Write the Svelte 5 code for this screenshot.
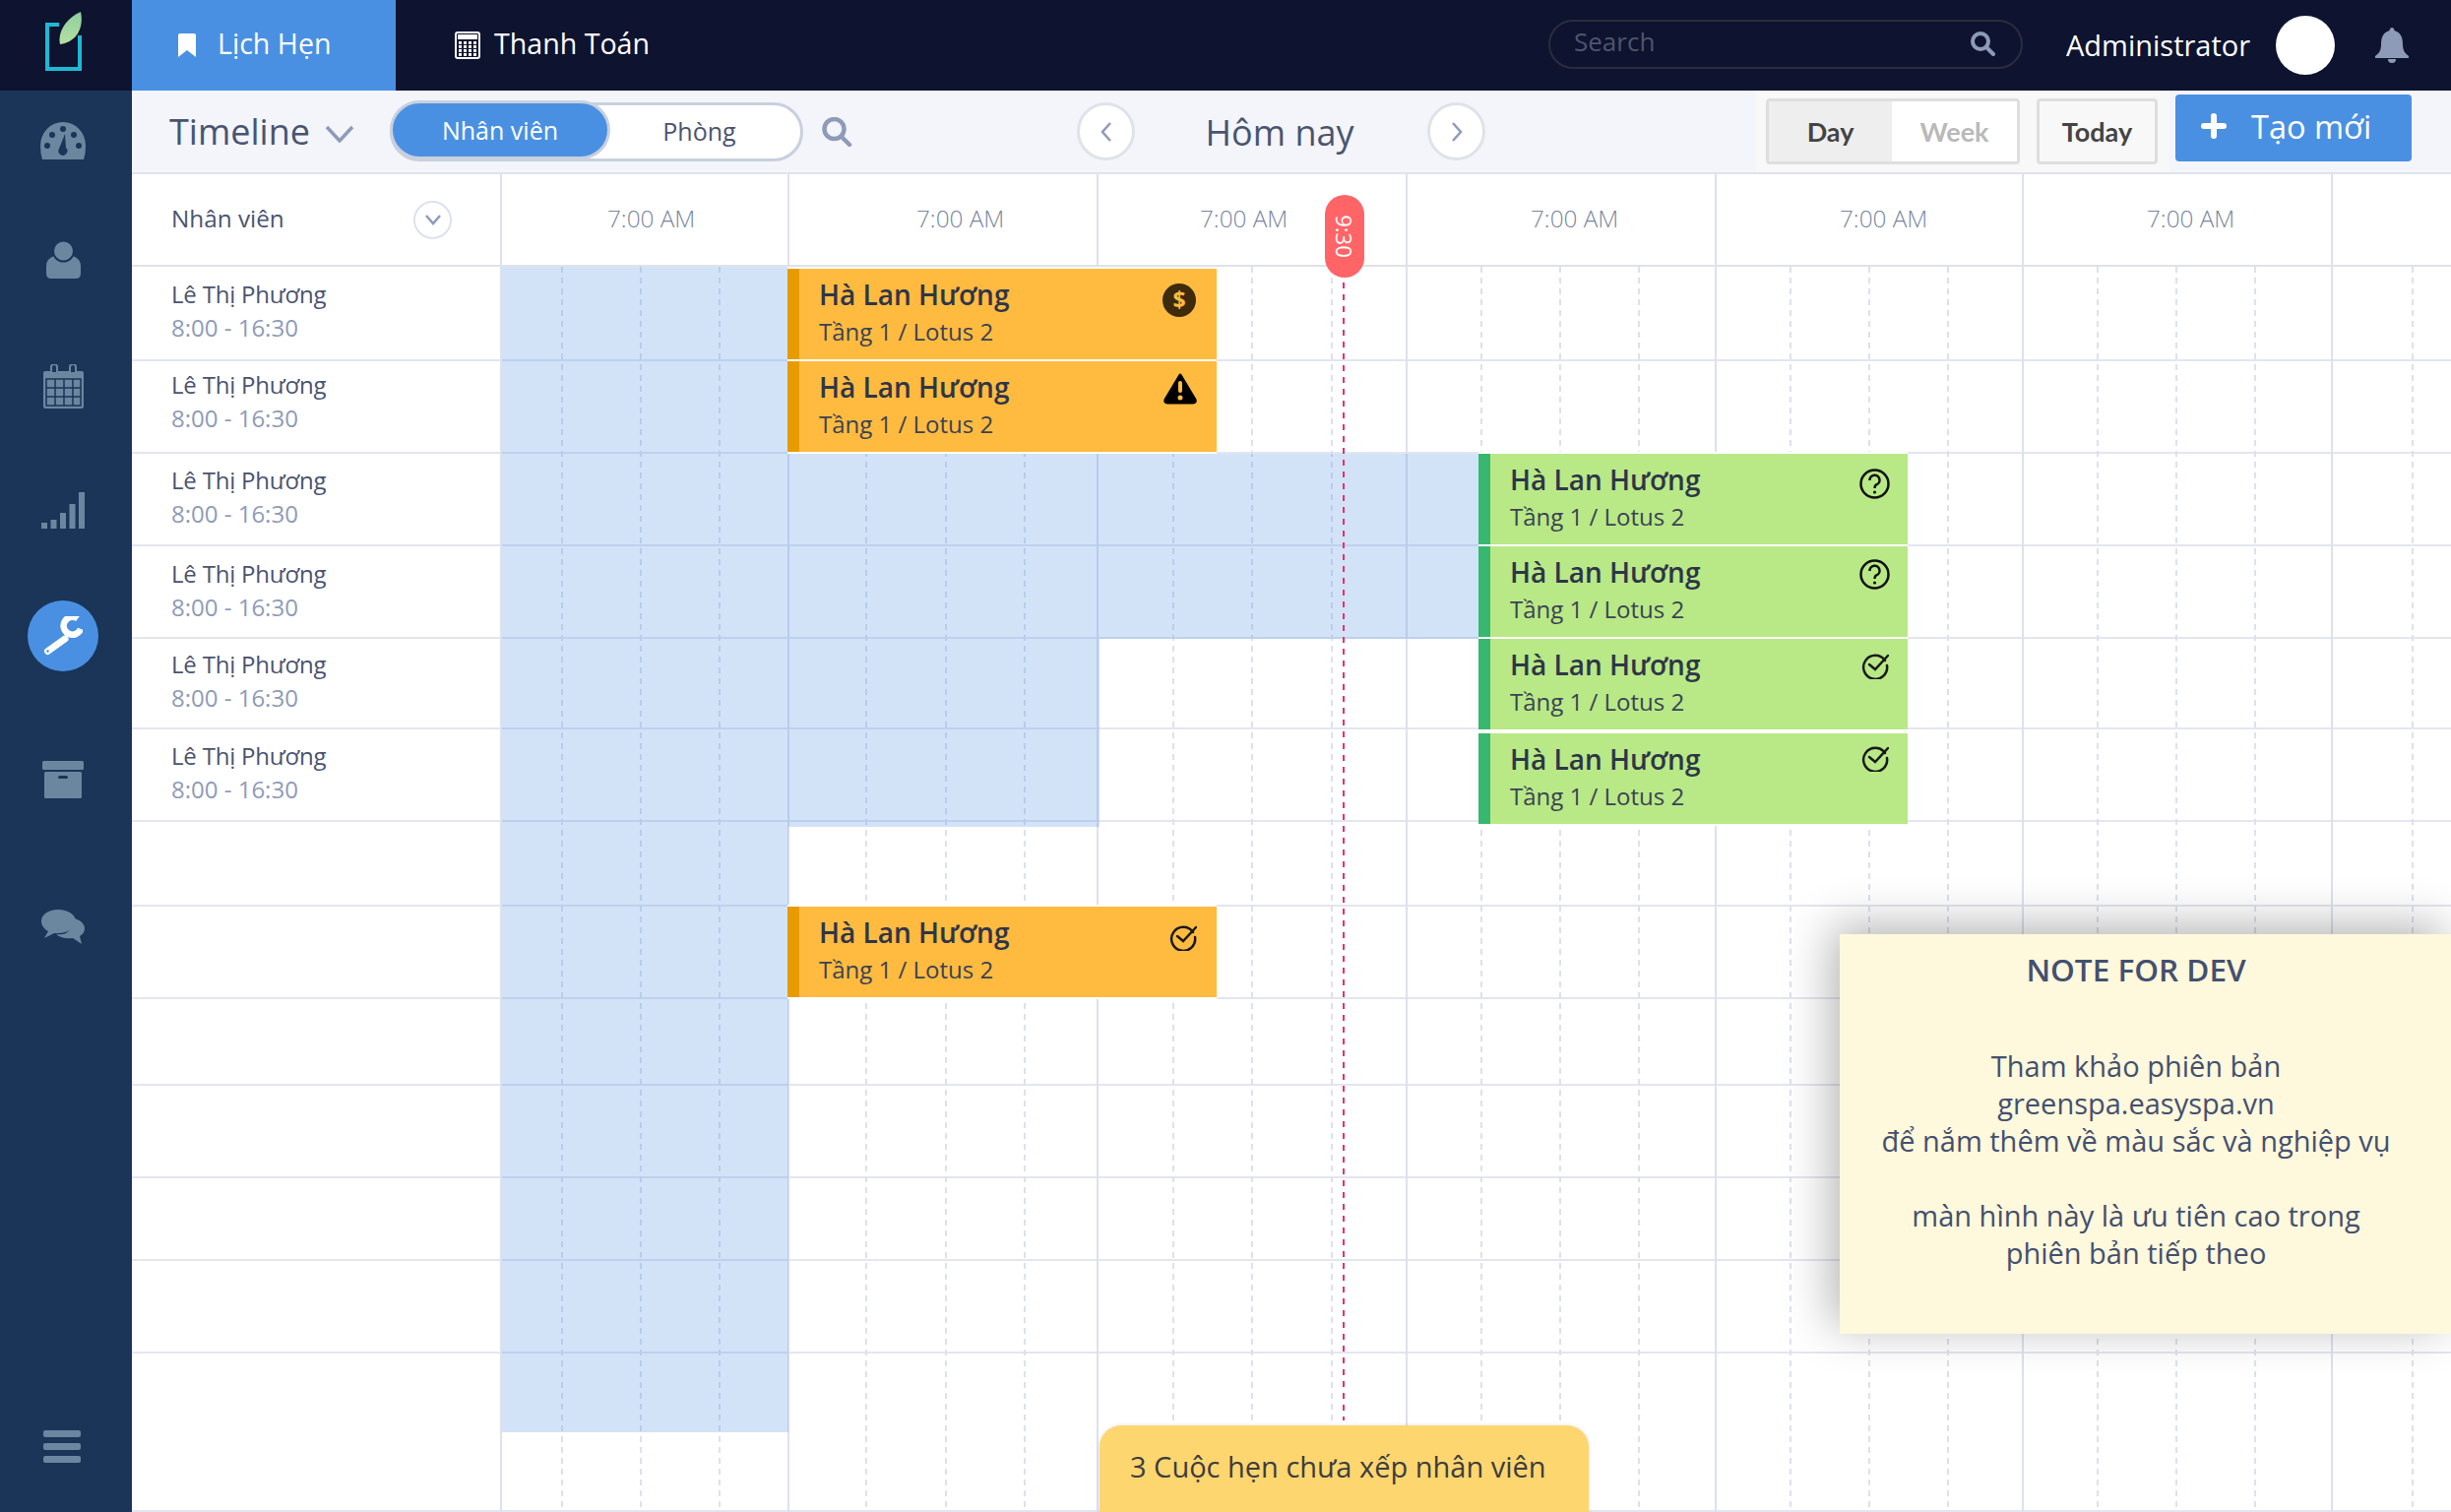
<script>
    const staff = [
        { name: 'Lê Thị Phương', time: '8:00 - 16:30', pad: 5 },
        { name: 'Lê Thị Phương', time: '8:00 - 16:30', pad: 11 },
        { name: 'Lê Thị Phương', time: '8:00 - 16:30', pad: 5 },
        { name: 'Lê Thị Phương', time: '8:00 - 16:30', pad: 2 },
        { name: 'Lê Thị Phương', time: '8:00 - 16:30', pad: 5 },
        { name: 'Lê Thị Phương', time: '8:00 - 16:30', pad: 5 }
    ];
    // bottom edge of each row, the first one starts right under the header
    const rowHeights = [96, 94, 94, 94, 92, 94, 86, 94, 88, 94, 84, 94, 161];

    const columns = [
        { width: 292, pad: 107, dashes: [60, 140, 220] },
        { width: 314, pad: 129, dashes: [77, 158, 238] },
        { width: 314, pad: 103, dashes: [75, 155, 236] },
        { width: 314, pad: 125, dashes: [74, 154, 234] },
        { width: 312, pad: 125, dashes: [74, 154, 234] },
        { width: 314, pad: 125, dashes: [74, 154, 234] },
        { width: 122, pad: 0, dashes: [80], empty: true }
    ];

    const blocks = [
        { x: 2, y: 0, w: 291, h: 1184 },
        { x: 293, y: 190, w: 316, h: 379 },
        { x: 609, y: 190, w: 385, h: 188 }
    ];

    const events = [
        { x: 292, y: 2, kind: 'orange', icon: 'dollar', top: 7, right: 3 },
        { x: 292, y: 96, kind: 'orange', icon: 'warn', top: 4, right: 2 },
        { x: 994, y: 190, kind: 'green', icon: 'question', top: 7, right: 0 },
        { x: 994, y: 284, kind: 'green', icon: 'question', top: 5, right: 0 },
        { x: 994, y: 378, kind: 'green', icon: 'check', top: 5, right: 1 },
        { x: 994, y: 474, kind: 'green', icon: 'check', top: 3, right: 1 },
        { x: 292, y: 650, kind: 'orange', icon: 'check', top: 9, right: 2 }
    ];

    const nav = [
        { id: 'gauge', gap: 15 },
        { id: 'person', gap: 49 },
        { id: 'calendar', gap: 56 },
        { id: 'bars', gap: 54 },
        { id: 'wrench', gap: 56, active: true },
        { id: 'archive', gap: 74 },
        { id: 'chat', gap: 77 }
    ];
</script>

<div class="app">
    <header class="topbar">
        <div class="logo">
            <svg width="38" height="60" viewBox="0 0 38 60">
                <defs>
                    <linearGradient id="leaf" x1="0" y1="0" x2="0" y2="1">
                        <stop offset="0" stop-color="#8ccf9d" />
                        <stop offset="1" stop-color="#b7dfa0" />
                    </linearGradient>
                </defs>
                <path d="M14 13 H2 V58 H35 V24" fill="none" stroke="#1fb8d3" stroke-width="4" />
                <path d="M15 33 C12 20 22 6 36 0 C39 14 34 30 15 33Z" fill="url(#leaf)" />
            </svg>
        </div>
        <a class="tab active">
            <svg width="20" height="24" viewBox="0 0 20 24"><path d="M1 2 Q1 0 3 0 H17 Q19 0 19 2 V24 L10 17 L1 24Z" fill="#fff" /></svg>
            <span>Lịch Hẹn</span>
        </a>
        <a class="tab">
            <svg width="26" height="28" viewBox="0 0 26 28">
                <rect x="1" y="1" width="24" height="26" rx="2" fill="none" stroke="#fff" stroke-width="2" />
                <rect x="3" y="3" width="20" height="5" fill="#fff" />
                {#each [0, 1, 2, 3] as c}
                    {#each [0, 1, 2, 3] as r}
                        <rect x={4 + c * 5} y={10 + r * 4} width="3" height="3" fill="#fff" />
                    {/each}
                {/each}
            </svg>
            <span>Thanh Toán</span>
        </a>
        <div class="search">
            <span>Search</span>
            <svg width="27" height="25" viewBox="0 0 27 25"><circle cx="11" cy="10" r="8" fill="none" stroke="#8e9bb8" stroke-width="4" /><path d="M17 16 L24 23" stroke="#8e9bb8" stroke-width="4" stroke-linecap="round" /></svg>
        </div>
        <div class="user">Administrator</div>
        <div class="avatar"></div>
        <svg class="bell" width="34" height="36" viewBox="0 0 34 36">
            <path d="M17 0 Q19 0 19.500 3 C26 5 28 10 28 17 C28 23 30 26 34 29 V31 H0 V29 C4 26 6 23 6 17 C6 10 8 5 14.500 3 Q15 0 17 0Z" fill="#8e9bb8" />
            <path d="M13 32 A4 4 0 0 0 21 32" fill="#8e9bb8" />
        </svg>
    </header>

    <div class="main">
        <nav class="sidebar">
            {#each nav as item}
                <div class="nav-item" class:active={item.active} style:margin-top="{item.gap}px">
                    {#if item.id === 'gauge'}
                        <svg width="46" height="38" viewBox="0 0 46 38">
                            <path d="M2 38 Q0 32 0 24 A23 24 0 0 1 46 24 Q46 32 44 38Z" fill="#6b869f" />
                            <g fill="#1a3558"><circle cx="12" cy="13" r="3" /><circle cx="23" cy="7" r="3" /><circle cx="34" cy="13" r="3" /><circle cx="7" cy="24" r="3" /><circle cx="39" cy="24" r="3" /></g>
                            <path d="M25 12 L26 26 A4.500 4.500 0 1 1 19 27Z" fill="#1a3558" />
                        </svg>
                    {:else if item.id === 'person'}
                        <svg width="35" height="38" viewBox="0 0 35 38">
                            <path d="M0 25 Q0 18 8 15 H27 Q35 18 35 25 V33 Q35 38 30 38 H5 Q0 38 0 33Z" fill="#6b869f" />
                            <circle cx="17.500" cy="10" r="10.500" fill="#6b869f" stroke="#1a3558" stroke-width="2" />
                        </svg>
                    {:else if item.id === 'calendar'}
                        <svg width="41" height="45" viewBox="0 0 41 45">
                            <path d="M2 7 H39 Q41 7 41 9 V43 Q41 45 39 45 H2 Q0 45 0 43 V9 Q0 7 2 7Z" fill="#6b869f" />
                            <path d="M8 8 V3 A3 3 0 0 1 14 3 V8 M27 8 V3 A3 3 0 0 1 33 3 V8" fill="#1a3558" stroke="#6b869f" stroke-width="2" />
                            <g fill="none" stroke="#1a3558" stroke-width="1.500">
                                <rect x="3" y="15" width="35" height="27" />
                                <path d="M3 24 H38 M3 33 H38 M12 15 V42 M21 15 V42 M30 15 V42" />
                            </g>
                        </svg>
                    {:else if item.id === 'bars'}
                        <svg width="44" height="37" viewBox="0 0 44 37" fill="#6b869f">
                            <rect x="0" y="31" width="6" height="6" /><rect x="9.500" y="28" width="6" height="9" /><rect x="19" y="21" width="6" height="16" /><rect x="28.500" y="12" width="6" height="25" /><rect x="38" y="0" width="6" height="37" />
                        </svg>
                    {:else if item.id === 'wrench'}
                        <svg width="40" height="41" viewBox="0 0 40 41">
                            <path d="M4.500 35.500 L22 23" stroke="#fff" stroke-width="7" stroke-linecap="round" />
                            <path d="M35 2.500 A9 9 0 1 0 38 13" fill="none" stroke="#fff" stroke-width="6.500" />
                            <circle cx="4.500" cy="35.500" r="1.300" fill="#4a90e2" />
                        </svg>
                    {:else if item.id === 'archive'}
                        <svg width="42" height="38" viewBox="0 0 42 38">
                            <rect x="0" y="0" width="42" height="9" rx="1.500" fill="#6b869f" />
                            <rect x="2" y="11" width="38" height="27" rx="1.500" fill="#6b869f" />
                            <rect x="16" y="15" width="10" height="3" rx="1.500" fill="#1a3558" />
                        </svg>
                    {:else}
                        <svg width="44" height="35" viewBox="0 0 44 35">
                            <path d="M29 9 C38 8 44 14 44 19 C44 23 42 25 39 27 L41 35 L32 29 C24 30 18 28 15 25 C25 27 35 20 29 9Z" fill="#6b869f" />
                            <path d="M17 0 C27 0 35 5 35 12 C35 19 27 24 17 24 L13 24 L3 29 L7 22 C3 20 0 16 0 12 C0 5 7 0 17 0Z" fill="#6b869f" />
                        </svg>
                    {/if}
                </div>
            {/each}
            <div class="burger"><i></i><i></i><i></i></div>
        </nav>

        <div class="content">
            <div class="toolbar">
                <span class="view">Timeline</span>
                <svg class="view-caret" width="30" height="18" viewBox="0 0 30 18"><path d="M2 2 L15 16 L28 2" fill="none" stroke="#8e9bb8" stroke-width="3.500" /></svg>
                <div class="toggle">
                    <span class="on">Nhân viên</span>
                    <span class="off">Phòng</span>
                </div>
                <svg class="find" width="31" height="30" viewBox="0 0 31 30"><circle cx="12.500" cy="12" r="10" fill="none" stroke="#8e9bb8" stroke-width="4.500" /><path d="M20 20 L28 28" stroke="#8e9bb8" stroke-width="4.500" stroke-linecap="round" /></svg>
                <div class="round prev"><svg width="14" height="22" viewBox="0 0 14 22"><path d="M11 2 L3 11 L11 20" fill="none" stroke="#8e9bb8" stroke-width="2.500" /></svg></div>
                <div class="today">Hôm nay</div>
                <div class="round"><svg width="14" height="22" viewBox="0 0 14 22"><path d="M3 2 L11 11 L3 20" fill="none" stroke="#8e9bb8" stroke-width="2.500" /></svg></div>
                <div class="actions">
                    <div class="range">
                        <span class="day">Day</span>
                        <span class="week">Week</span>
                    </div>
                    <div class="btn-today">Today</div>
                </div>
                <div class="create">
                    <svg width="26" height="26" viewBox="0 0 26 26"><path d="M13 3 V23 M3 13 H23" stroke="#fff" stroke-width="6" stroke-linecap="round" /></svg>
                    Tạo mới
                </div>
            </div>

            <div class="board">
                <div class="head">
                    <div class="head-name">
                        <span>Nhân viên</span>
                        <div class="caret"><svg width="18" height="12" viewBox="0 0 18 12"><path d="M2 2 L9 10 L16 2" fill="none" stroke="#8e9bb8" stroke-width="2.500" /></svg></div>
                    </div>
                    {#each columns as col}
                        <div class="head-col" style:width="{col.width}px" style:padding-left="{col.pad}px">
                            {#if !col.empty}<span>7:00 AM</span>{/if}
                        </div>
                    {/each}
                </div>

                <div class="rows">
                    {#each rowHeights as h, i}
                        <div class="row" style:height="{h}px" style:padding-bottom="{staff[i] ? staff[i].pad : 0}px">
                            {#if staff[i]}
                                <div class="who">{staff[i].name}</div>
                                <div class="shift">{staff[i].time}</div>
                            {/if}
                        </div>
                    {/each}

                    <div class="canvas">
                        {#each columns as col}
                            <div class="col" style:width="{col.width}px">
                                {#each col.dashes as d}
                                    <i class="dash" style:left="{d}px"></i>
                                {/each}
                            </div>
                        {/each}
                        {#each blocks as b}
                            <div class="block" style:left="{b.x}px" style:top="{b.y}px" style:width="{b.w}px" style:height="{b.h}px"></div>
                        {/each}
                        <i class="now-line"></i>
                        {#each events as ev}
                            <div class="event {ev.kind}" style:left="{ev.x}px" style:top="{ev.y}px">
                                <div class="event-text">
                                    <div class="event-title">Hà Lan Hương</div>
                                    <div class="event-place">Tầng 1 / Lotus 2</div>
                                </div>
                                <div class="ev-icon" style:margin-top="{ev.top}px" style:margin-right="{ev.right}px">
                                    {#if ev.icon === 'dollar'}
                                        <svg width="34" height="34" viewBox="0 0 34 34">
                                            <circle cx="17" cy="17" r="17" fill="#3d2b0c" />
                                            <text x="17" y="25" text-anchor="middle" fill="#ffbb40" font-size="23" font-weight="700" font-family="Open Sans, sans-serif">$</text>
                                        </svg>
                                    {:else if ev.icon === 'warn'}
                                        <svg width="34" height="32" viewBox="0 0 34 32">
                                            <path d="M17 2 L32 27 Q33 30 30 30 H4 Q1 30 2 27Z" fill="#000" stroke="#000" stroke-width="3" stroke-linejoin="round" />
                                            <rect x="15" y="8" width="4" height="12" rx="2" fill="#ffbb40" />
                                            <circle cx="17" cy="25" r="2.500" fill="#ffbb40" />
                                        </svg>
                                    {:else if ev.icon === 'question'}
                                        <svg width="31" height="31" viewBox="0 0 31 31">
                                            <circle cx="15.500" cy="15.500" r="14" fill="none" stroke="#111" stroke-width="2.500" />
                                            <path d="M10.500 12 A5 5 0 1 1 17 16.500 Q15.500 17.200 15.500 20" fill="none" stroke="#111" stroke-width="2.500" />
                                            <circle cx="15.500" cy="24" r="1.600" fill="#111" />
                                        </svg>
                                    {:else}
                                        <svg width="28" height="28" viewBox="0 0 28 28">
                                            <path d="M24 9 A12 12 0 1 0 26 14" fill="none" stroke="#1a1a1a" stroke-width="2.500" stroke-linecap="round" />
                                            <path d="M8 13 L14 18 L27 4" fill="none" stroke="#1a1a1a" stroke-width="2.500" stroke-linecap="round" />
                                        </svg>
                                    {/if}
                                </div>
                            </div>
                        {/each}
                    </div>
                </div>

                <div class="now-pill"><span>9:30</span></div>

                <aside class="note">
                    <h3>NOTE FOR DEV</h3>
                    <p>Tham khảo phiên bản<br />greenspa.easyspa.vn<br />để nắm thêm về màu sắc và nghiệp vụ</p>
                    <p>màn hình này là ưu tiên cao trong<br />phiên bản tiếp theo</p>
                </aside>

                <div class="pending">3 Cuộc hẹn chưa xếp nhân viên</div>
            </div>
        </div>
    </div>
</div>

<style>
    :global(body) {
        margin: 0;
        font-family: "Open Sans", sans-serif;
    }
    .app {
        width: 2490px;
        height: 1536px;
        overflow: hidden;
        display: flex;
        flex-direction: column;
        background: #fff;
    }
    .topbar {
        height: 92px;
        flex: none;
        display: flex;
        align-items: center;
        background: #0e1330;
        color: #fff;
    }
    .logo {
        width: 134px;
        height: 92px;
        padding: 12px 0 0 46px;
        box-sizing: border-box;
        flex: none;
    }
    .tab {
        height: 92px;
        display: flex;
        align-items: center;
        box-sizing: border-box;
        flex: none;
        font-size: 28.6px;
        gap: 14px;
        padding-left: 60px;
    }
    .tab span {
        margin-bottom: 6px;
    }
    .tab.active {
        width: 268px;
        padding-left: 46px;
        gap: 21px;
        background: #4a90e2;
    }
    .search {
        margin-left: auto;
        width: 482px;
        height: 50px;
        box-sizing: border-box;
        margin-top: -3px;
        border: 2px solid #2a2e3c;
        border-radius: 25px;
        display: flex;
        align-items: center;
        justify-content: space-between;
        padding: 0 25px 0 24px;
        font-size: 26px;
        color: #4d566c;
        margin-right: 44px;
    }
    .search span {
        margin-bottom: 5px;
    }
    .user {
        font-size: 29px;
        width: 188px;
        white-space: nowrap;
        margin-bottom: 2px;
    }
    .avatar {
        width: 60px;
        height: 60px;
        border-radius: 50%;
        background: #fff;
        margin-left: 25px;
    }
    .bell {
        margin: 0 43px 0 41px;
    }
    .main {
        flex: 1;
        display: flex;
        min-height: 0;
    }
    .sidebar {
        width: 134px;
        flex: none;
        display: flex;
        flex-direction: column;
        padding-left: 28px;
        padding-bottom: 50px;
        box-sizing: border-box;
        background: #1a3558;
    }
    .nav-item {
        width: 72px;
        height: 72px;
        display: flex;
        align-items: center;
        justify-content: center;
        border-radius: 50%;
        flex: none;
    }
    .nav-item.active {
        background: #4a90e2;
    }
    .burger {
        margin-top: auto;
        margin-left: 16px;
        display: flex;
        flex-direction: column;
        gap: 6px;
    }
    .burger i {
        width: 38px;
        height: 7px;
        border-radius: 2px;
        background: #6b869f;
    }
    .content {
        flex: 1;
        min-width: 0;
        display: flex;
        flex-direction: column;
    }
    .toolbar {
        height: 85px;
        flex: none;
        box-sizing: border-box;
        display: flex;
        align-items: center;
        padding-left: 38px;
        background: #f3f5fa;
        border-bottom: 2px solid #dfe2ea;
    }
    .view {
        font-size: 36px;
        width: 142px;
        color: #4a5470;
        white-space: nowrap;
        flex: none;
    }
    .view-caret {
        flex: none;
        margin-left: 16px;
        margin-top: 4px;
    }
    .toggle {
        flex: none;
        width: 420px;
        height: 60px;
        box-sizing: border-box;
        margin-left: 36px;
        display: flex;
        border: 3px solid #c8d0de;
        border-radius: 30px;
        background: #fff;
        font-size: 25px;
        align-items: center;
    }
    .toggle .on {
        width: 224px;
        height: 60px;
        margin: -3px 0 0 -3px;
        box-sizing: border-box;
        border: 3px solid #c8d0de;
        border-radius: 30px;
        background: #4a90e2;
        color: #fff;
        display: flex;
        align-items: center;
        justify-content: center;
    }
    .toggle .off {
        flex: 1;
        text-align: center;
        color: #4a5470;
        margin: -2px 12px 0 0;
    }
    .find {
        flex: none;
        margin-left: 19px;
    }
    .round {
        flex: none;
        width: 59px;
        height: 59px;
        box-sizing: border-box;
        border: 3px solid #dfe2ea;
        border-radius: 50%;
        background: #fff;
        display: flex;
        align-items: center;
        justify-content: center;
    }
    .round.prev {
        margin-left: 228px;
    }
    .today {
        flex: none;
        width: 297px;
        box-sizing: border-box;
        padding-right: 3px;
        text-align: center;
        font-size: 36px;
        color: #4a5470;
        margin-top: 2px;
    }
    .actions {
        flex: none;
        height: 83px;
        box-sizing: border-box;
        margin-left: 275px;
        padding: 8px 12px 8px 10px;
        display: flex;
        gap: 17px;
        background: #f8f8f8;
    }
    .range, .btn-today {
        box-sizing: border-box;
        height: 67px;
        border: 3px solid #dedede;
        border-radius: 4px;
        display: flex;
        align-items: center;
        font-family: Lato, sans-serif;
        font-weight: 700;
        font-size: 27px;
        color: #444;
    }
    .range {
        width: 258px;
        overflow: hidden;
    }
    .range span {
        height: 100%;
        display: flex;
        align-items: center;
        justify-content: center;
    }
    .day {
        width: 125px;
        background: #eee;
    }
    .week {
        flex: 1;
        background: #fff;
        color: #b9b9b9;
    }
    .btn-today {
        width: 123px;
        justify-content: center;
    }
    .create {
        flex: none;
        margin-left: 6px;
        width: 240px;
        height: 68px;
        box-sizing: border-box;
        margin-top: -7px;
        padding: 0 0 4px 26px;
        gap: 25px;
        border-radius: 4px;
        background: #4a90e2;
        color: #fff;
        font-size: 32.5px;
        display: flex;
        align-items: center;
    }
    .board {
        flex: 1;
        position: relative;
        overflow: hidden;
        min-height: 0;
    }
    .head {
        height: 94px;
        box-sizing: border-box;
        display: flex;
        border-bottom: 2px solid #dfe2e8;
    }
    .head-name {
        width: 374px;
        box-sizing: border-box;
        flex: none;
        padding: 0 49px 0 40px;
        display: flex;
        align-items: center;
        justify-content: space-between;
        font-size: 24.3px;
        color: #4a5470;
    }
    .head-name span, .head-col span {
        margin-bottom: 3px;
    }
    .caret {
        width: 39px;
        height: 39px;
        box-sizing: border-box;
        border: 2px solid #dde1ee;
        border-radius: 50%;
        display: flex;
        align-items: center;
        justify-content: center;
    }
    .head-col {
        flex: none;
        box-sizing: border-box;
        display: flex;
        align-items: center;
        border-left: 2px solid #dde1ee;
        font-size: 24.3px;
        font-weight: 300;
        color: #78859f;
        white-space: nowrap;
    }
    .rows {
        position: relative;
    }
    .row {
        box-sizing: border-box;
        border-bottom: 2px solid #e3e6f0;
        padding-left: 40px;
        display: flex;
        flex-direction: column;
        justify-content: center;
    }
    .who {
        font-size: 24px;
        line-height: 34px;
        letter-spacing: -0.2px;
        color: #4a5470;
    }
    .shift {
        font-size: 24px;
        line-height: 34px;
        color: #8e9bb8;
    }
    .canvas {
        position: absolute;
        left: 374px;
        top: 0;
        right: 0;
        bottom: 0;
        display: flex;
    }
    .col {
        position: relative;
        flex: none;
        box-sizing: border-box;
        border-left: 2px solid #dde1ee;
    }
    .dash {
        position: absolute;
        top: 0;
        bottom: 0;
        width: 2px;
        background: repeating-linear-gradient(to bottom, #dde1ee 0 6px, transparent 6px 11px);
    }
    .block {
        position: absolute;
        background: rgba(74, 144, 226, 0.25);
    }
    .now-line {
        position: absolute;
        left: 856px;
        top: 16px;
        height: 1156px;
        width: 2px;
        background: repeating-linear-gradient(to bottom, #e9306c 0 6px, transparent 6px 12px);
    }
    .event {
        position: absolute;
        width: 436px;
        height: 92px;
        box-sizing: border-box;
        display: flex;
        justify-content: space-between;
        align-items: flex-start;
        padding: 8px 18px 0 20px;
        box-shadow: 0 2px 0 #fff, 0 -2px 0 #fff;
    }
    .event.orange {
        background: #ffbb40;
        border-left: 12px solid #e89b00;
    }
    .event.green {
        background: #b8e986;
        border-left: 12px solid #38b770;
    }
    .event-title {
        font-size: 28px;
        line-height: 36px;
        font-weight: 600;
        color: #2f3549;
    }
    .event-place {
        font-size: 24px;
        line-height: 34px;
        margin-top: 3px;
        color: #3c4254;
    }
    .ev-icon {
        line-height: 0;
    }
    .now-pill {
        position: absolute;
        left: 1212px;
        top: 21px;
        width: 40px;
        height: 84px;
        border-radius: 20px;
        background: #ff6467;
        display: flex;
        align-items: center;
        justify-content: center;
    }
    .now-pill span {
        transform: rotate(90deg);
        font-size: 22px;
        color: #fff;
    }
    .note {
        position: absolute;
        left: 1735px;
        top: 772px;
        width: 621px;
        height: 406px;
        box-sizing: border-box;
        padding: 17px 19px 0 0;
        background: #fef8dc;
        box-shadow: -8px -8px 45px rgba(0, 0, 0, 0.3);
        text-align: center;
        color: #44506e;
    }
    .note h3 {
        margin: 0;
        font-size: 31.5px;
        line-height: 38px;
        font-weight: 600;
    }
    .note p {
        margin: 0;
        font-size: 29px;
        line-height: 38px;
        font-weight: 500;
    }
    .note h3 + p {
        margin-top: 60px;
    }
    .note p + p {
        margin-top: 38px;
    }
    .pending {
        position: absolute;
        left: 983px;
        top: 1271px;
        width: 497px;
        height: 100px;
        box-sizing: border-box;
        padding: 22px 0 0 31px;
        border-radius: 22px 22px 0 0;
        background: #fed670;
        box-shadow: 0 0 4px rgba(0, 0, 0, 0.12);
        font-size: 29px;
        font-weight: 500;
        color: #3d3d3d;
        white-space: nowrap;
    }
</style>
